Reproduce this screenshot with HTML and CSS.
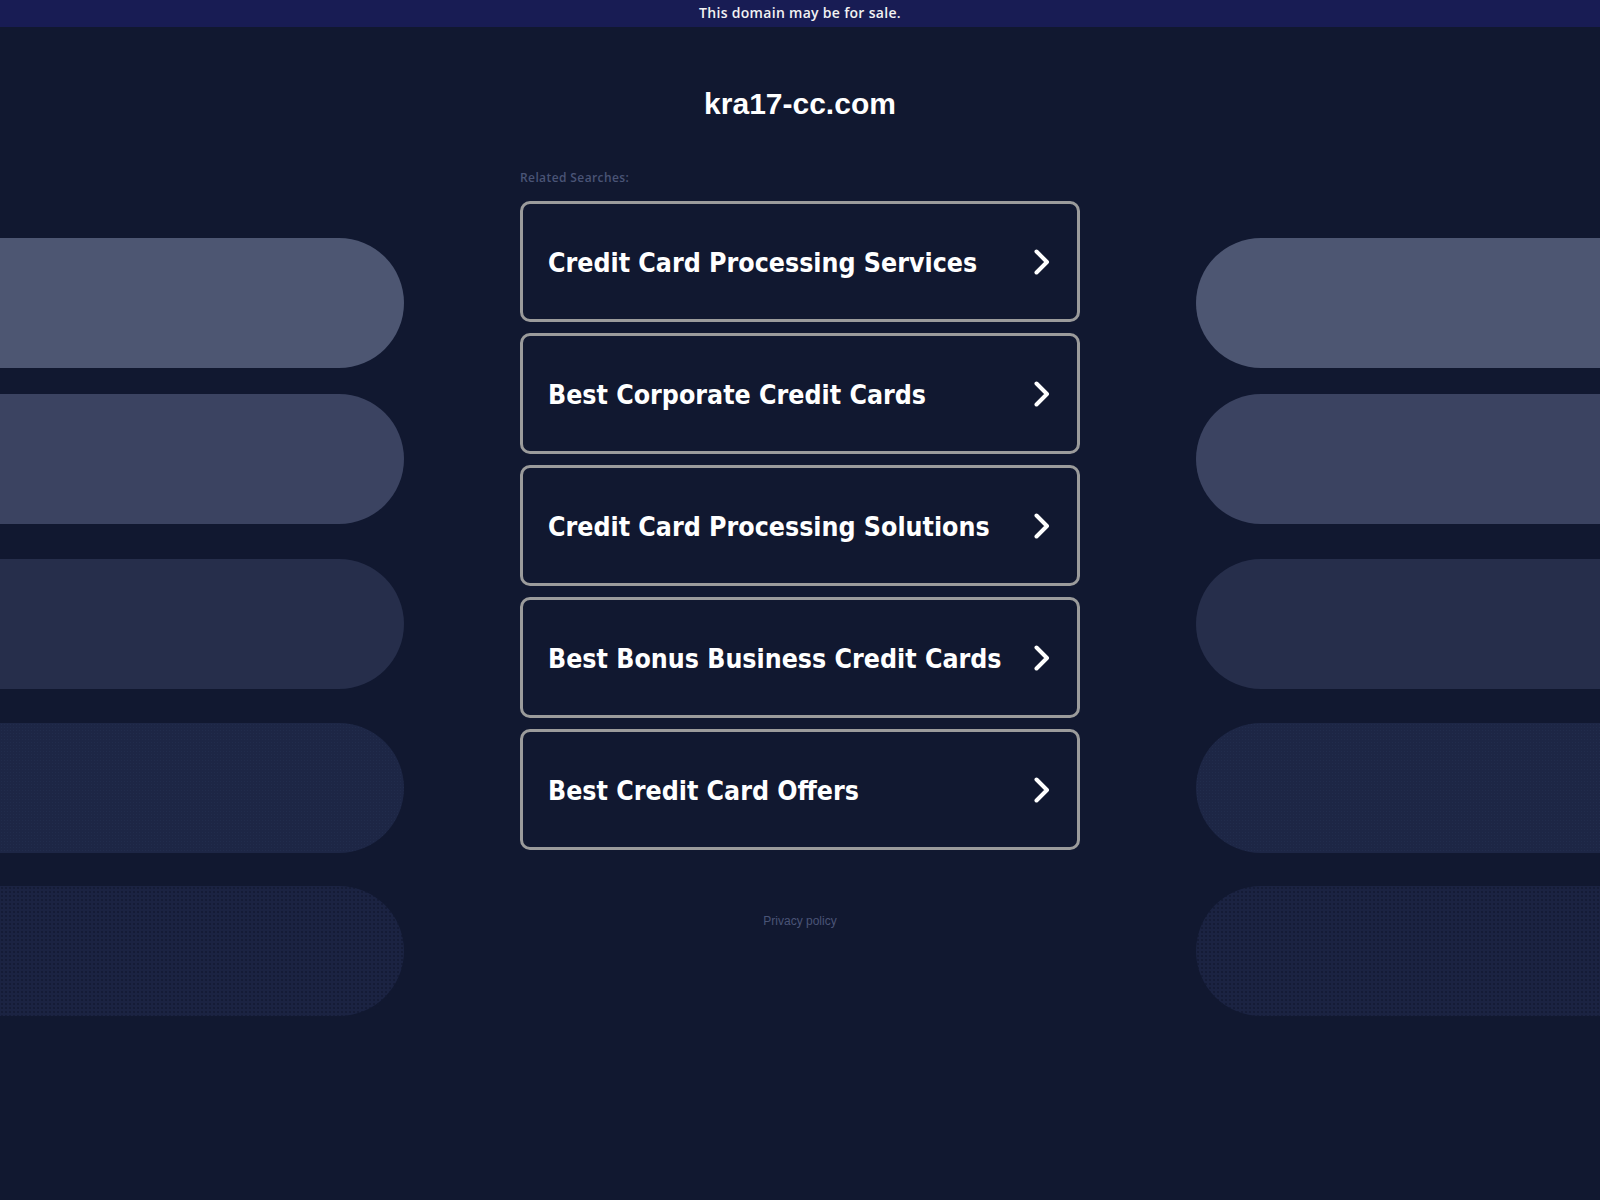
FILE: index.html
```html
<!DOCTYPE html>
<html lang="en">
<head>
  <meta charset="UTF-8">
  <meta name="viewport" content="width=device-width, initial-scale=1.0">
  <title>kra17-cc.com</title>
  <link rel="stylesheet" href="styles.css">
</head>
<body>

  <div class="sale-bar">This domain may be for sale.</div>

  <div class="page">
    <!-- decorative pills, left side -->
    <div class="pills pills-left">
      <div class="pill p1"></div>
      <div class="pill p2"></div>
      <div class="pill p3"></div>
      <div class="pill p4"></div>
      <div class="pill p5"></div>
    </div>

    <div class="main">
      <h1 class="domain">kra17-cc.com</h1>
      <div class="related">Related Searches:</div>

      <div class="links">
        <a class="link" href="#">
          <span>Credit Card Processing Services</span>
          <svg class="chev" width="16" height="26" viewBox="0 0 16 26"><polyline points="2.5,2.5 13,13 2.5,23.5"/></svg>
        </a>
        <a class="link" href="#">
          <span>Best Corporate Credit Cards</span>
          <svg class="chev" width="16" height="26" viewBox="0 0 16 26"><polyline points="2.5,2.5 13,13 2.5,23.5"/></svg>
        </a>
        <a class="link" href="#">
          <span>Credit Card Processing Solutions</span>
          <svg class="chev" width="16" height="26" viewBox="0 0 16 26"><polyline points="2.5,2.5 13,13 2.5,23.5"/></svg>
        </a>
        <a class="link" href="#">
          <span>Best Bonus Business Credit Cards</span>
          <svg class="chev" width="16" height="26" viewBox="0 0 16 26"><polyline points="2.5,2.5 13,13 2.5,23.5"/></svg>
        </a>
        <a class="link" href="#">
          <span>Best Credit Card Offers</span>
          <svg class="chev" width="16" height="26" viewBox="0 0 16 26"><polyline points="2.5,2.5 13,13 2.5,23.5"/></svg>
        </a>
      </div>

      <a class="privacy" href="#">Privacy policy</a>
    </div>

    <!-- decorative pills, right side -->
    <div class="pills pills-right">
      <div class="pill p1"></div>
      <div class="pill p2"></div>
      <div class="pill p3"></div>
      <div class="pill p4"></div>
      <div class="pill p5"></div>
    </div>
  </div>

</body>
</html>
```

FILE: styles.css
```css
body {
  margin: 0;
  background-color: #111830;
  font-family: "Liberation Sans", Arial, sans-serif;
  min-height: 1200px;
}

.sale-bar {
  height: 27px;
  line-height: 26px;
  background-color: #181c54;
  color: #f2f2f2;
  text-align: center;
  font-family: "Open Sans", sans-serif;
  font-weight: 600;
  font-size: 14px;
  letter-spacing: 0.3px;
}

.page {
  display: grid;
  grid-template-columns: 404px 1fr 404px;
}

/* side pills */
.pills {
  display: flex;
  flex-direction: column;
  padding-top: 211px;
}
.pill {
  height: 130px;
}
.pill.p1 {
  background-color: #4d5672;
  margin-bottom: 26px;
}
.pill.p2 {
  background-color: #3b4361;
  margin-bottom: 35px;
}
.pill.p3 {
  background-color: #262e4b;
  margin-bottom: 34px;
}
.pill.p4 {
  background-color: #1d2645;
  background-image: radial-gradient(circle, rgba(45, 56, 92, 0.3) 0.6px, transparent 1px);
  background-size: 3px 3px;
  margin-bottom: 33px;
}
.pill.p5 {
  background-color: #1b2342;
  background-image: radial-gradient(circle, rgba(12, 16, 38, 0.55) 0.6px, transparent 1px);
  background-size: 4px 4px;
}
.pills-left .pill {
  border-radius: 0 65px 65px 0;
}
.pills-right .pill {
  border-radius: 65px 0 0 65px;
}

/* centre column */
.main {
  width: 560px;
  margin: 0 auto;
  display: flex;
  flex-direction: column;
}

.domain {
  margin: 60px 0 0;
  text-align: center;
  color: #fff;
  font-size: 30px;
  font-weight: bold;
  line-height: 34px;
}

.related {
  margin-top: 48px;
  height: 18px;
  line-height: 18px;
  font-family: "Open Sans", sans-serif;
  font-weight: 600;
  font-size: 12px;
  letter-spacing: 0.4px;
  color: #4a5476;
}

.links {
  margin-top: 14px;
  display: flex;
  flex-direction: column;
  gap: 11px;
}

.link {
  display: flex;
  align-items: center;
  justify-content: space-between;
  height: 113px;
  padding: 2px 27px 0 25px;
  border: 3px solid #9b9b9b;
  border-radius: 10px;
  color: #fff;
  text-decoration: none;
  font-family: "DejaVu Sans Condensed", "DejaVu Sans", sans-serif;
  font-stretch: condensed;
  font-weight: bold;
  font-size: 26.5px;
}

.chev {
  fill: none;
  stroke: #fff;
  stroke-width: 4;
  stroke-linecap: round;
  stroke-linejoin: round;
  margin-top: -2px;
}

.privacy {
  margin-top: 64px;
  text-align: center;
  font-size: 12px;
  color: #4a5476;
  text-decoration: none;
}
```
